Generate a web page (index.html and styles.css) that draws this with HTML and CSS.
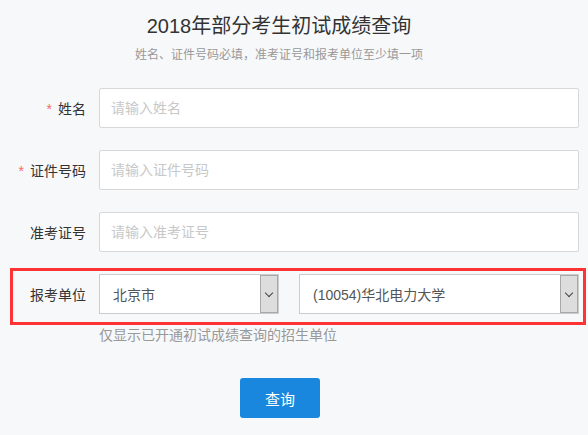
FILE: index.html
```html
<!DOCTYPE html>
<html lang="zh-CN">
<head>
    <meta charset="UTF-8">
    <meta name="viewport" content="width=device-width, initial-scale=1.0">
    <title>2018年部分考生初试成绩查询</title>
    <link rel="stylesheet" href="styles.css">
</head>
<body>
    <div class="header">
        <h1>2018年部分考生初试成绩查询</h1>
        <p class="tip">姓名、证件号码必填，准考证号和报考单位至少填一项</p>
    </div>

    <form class="query-form" onsubmit="return false">
        <div class="row">
            <label for="xm"><span class="req">*</span>姓名</label>
            <input type="text" id="xm" placeholder="请输入姓名">
        </div>

        <div class="row">
            <label for="zjhm"><span class="req">*</span>证件号码</label>
            <input type="text" id="zjhm" placeholder="请输入证件号码">
        </div>

        <div class="row">
            <label for="zkzh">准考证号</label>
            <input type="text" id="zkzh" placeholder="请输入准考证号">
        </div>

        <div class="row row-mark">
            <label>报考单位</label>
            <div class="select-group">
                <div class="select select-city">
                    <span>北京市</span>
                    <i class="arrow"></i>
                </div>
                <div class="select select-school">
                    <span>(10054)华北电力大学</span>
                    <i class="arrow"></i>
                </div>
            </div>
        </div>

        <p class="hint">仅显示已开通初试成绩查询的招生单位</p>

        <button type="submit" class="btn">查询</button>
    </form>
</body>
</html>
```

FILE: styles.css
```css
* {
    margin: 0;
    padding: 0;
    box-sizing: border-box;
    font-family: "Liberation Sans", "Noto Sans CJK SC", sans-serif;
}

body {
    background: #f7f8fa;
    color: #333;
    width: 588px;
}

.header {
    padding: 11px 30px 0 0;
    text-align: center;
}

h1 {
    font-size: 20px;
    font-weight: normal;
    line-height: 30px;
    color: #333;
}

.tip {
    font-size: 12px;
    line-height: 20px;
    margin-top: 4px;
    color: #999;
}

.query-form {
    margin: 23px 0 0 13px;
    width: 570px;
}

.row {
    display: flex;
    align-items: center;
    height: 40px;
    margin-bottom: 22px;
    padding-right: 4px;
    position: relative;
}

.row label {
    width: 73px;
    text-align: right;
    font-size: 14px;
    color: #333;
    margin-right: 13px;
}

.req {
    color: #f56c6c;
    margin-right: 6px;
}

.row input {
    flex: 1;
    height: 40px;
    border: 1px solid #d8d8d8;
    border-radius: 2px;
    background: #fff;
    padding: 0 11px;
    font-size: 14px;
    color: #333;
    outline: none;
}

.row input::placeholder {
    color: #c8c8c8;
}

/* red frame around the unit row */
.row-mark::after {
    content: '';
    position: absolute;
    top: -6px;
    bottom: -11px;
    left: -3px;
    right: -3px;
    border: 3px solid #f33;
    pointer-events: none;
}

.select-group {
    flex: 1;
    display: flex;
    gap: 20px;
}

.select {
    display: flex;
    align-items: center;
    height: 40px;
    background: #fff;
    border: 1px solid #ccc;
    font-size: 14px;
    color: #555;
}

.select span {
    flex: 1;
    padding-left: 13px;
}

.select-city {
    width: 180px;
}

.select-school {
    flex: 1;
}

.arrow {
    width: 18px;
    height: 38px;
    background: #ddd;
    border: 1px solid #a8a8a8;
    position: relative;
}

.arrow::before {
    content: '';
    position: absolute;
    left: 5px;
    top: 14px;
    width: 5px;
    height: 5px;
    border-right: 1px solid #444;
    border-bottom: 1px solid #444;
    transform: rotate(45deg);
}

.hint {
    margin: -11px 0 0 86px;
    font-size: 14px;
    line-height: 20px;
    color: #999;
}

.btn {
    display: block;
    margin: 33px 0 0 227px;
    width: 80px;
    height: 40px;
    border: none;
    border-radius: 3px;
    background: #1a87de;
    color: #fff;
    font-size: 15px;
    cursor: pointer;
}
```
